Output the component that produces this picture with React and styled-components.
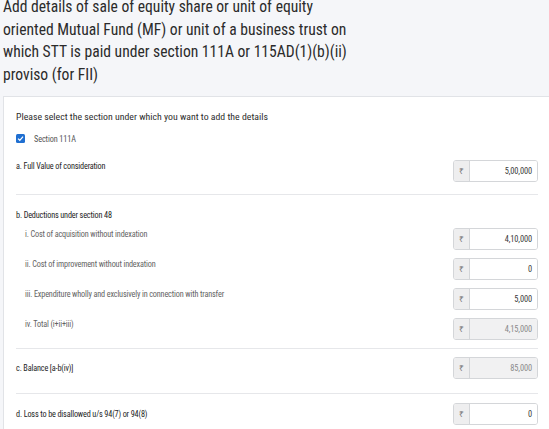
import React from 'react';
import styled, { createGlobalStyle } from 'styled-components';

const GlobalStyle = createGlobalStyle`
  html, body {
    margin: 0;
    background: #f5f6f9;
    overflow: hidden;
  }
  * {
    box-sizing: border-box;
  }
`;

const Page = styled.div`
  padding: 0 0 0 3px;
  font-family: "Roboto Condensed", Roboto, "Liberation Sans", sans-serif;
  color: #333;
`;

const Title = styled.h1`
  margin: -4px 0 0;
  width: 360px;
  font-size: 15.6px;
  font-weight: 400;
  line-height: 22.7px;
  color: #2b2b2b;
`;

const Card = styled.div`
  margin-top: 9px;
  background: #fff;
  border: 1px solid #e1e3e7;
  border-right: none;
  padding: 0 11px 0 12px;
`;

const Section = styled.div`
  padding-top: ${p => p.$top}px;
  padding-bottom: ${p => p.$bottom}px;
  border-bottom: ${p => (p.$last ? 'none' : '1px solid #e6e7ea')};
`;

const Prompt = styled.div`
  font-size: 9.8px;
  line-height: 14px;
  color: #2e2e2e;
`;

const CheckRow = styled.label`
  display: flex;
  align-items: center;
  gap: 9px;
  height: 14px;
  margin: 8px 0 14px;
  font-size: 8.2px;
  letter-spacing: -0.1px;
  color: #555;
`;

const Box = styled.span`
  width: 9px;
  height: 9px;
  border-radius: 1.5px;
  background: #1f6fd1;
  display: flex;
  align-items: center;
  justify-content: center;
`;

const Row = styled.div`
  display: flex;
  justify-content: space-between;
  align-items: ${p => (p.$center ? 'center' : 'flex-start')};
  padding-left: ${p => (p.$sub ? 9 : 0)}px;
  margin-top: ${p => p.$gap || 0}px;
`;

const Label = styled.div`
  font-size: 8.2px;
  letter-spacing: -0.15px;
  line-height: 12px;
  color: ${p => (p.$sub ? '#636363' : '#242424')};
`;

const Group = styled.div`
  display: flex;
  width: 85px;
  height: 22px;
  border: 1px solid #d4d6d9;
  border-radius: 3px;
  overflow: hidden;
`;

const Addon = styled.span`
  width: 16px;
  background: #eeeeef;
  border-right: 1px solid #d4d6d9;
  display: flex;
  align-items: center;
  justify-content: center;
  font-family: "Noto Sans", "DejaVu Sans", sans-serif;
  font-size: 8.5px;
  color: #777;
`;

const Value = styled.span`
  flex: 1;
  display: flex;
  align-items: center;
  justify-content: flex-end;
  padding-right: 5px;
  font-size: 8.4px;
  letter-spacing: -0.1px;
  background: ${p => (p.$disabled ? '#f1f1f2' : '#fff')};
  color: ${p => (p.$disabled ? '#8a8a8a' : '#3a3a3a')};
`;

function Amount({ value, disabled }) {
  return (
    <Group>
      <Addon>₹</Addon>
      <Value $disabled={disabled}>{value}</Value>
    </Group>
  );
}

const deductions = [
  { label: 'i. Cost of acquisition without indexation', value: '4,10,000' },
  { label: 'ii. Cost of improvement without indexation', value: '0' },
  { label: 'iii. Expenditure wholly and exclusively in connection with transfer', value: '5,000' },
  { label: 'iv. Total (i+ii+iii)', value: '4,15,000', disabled: true },
];

export default function App() {
  return (
    <>
      <GlobalStyle />
      <Page>
        <Title>
          Add details of sale of equity share or unit of equity oriented Mutual Fund (MF) or unit
          of a business trust on which STT is paid under section 111A or 115AD(1)(b)(ii) proviso
          (for FII)
        </Title>
        <Card>
          <Section $top={13} $bottom={12}>
            <Prompt>Please select the section under which you want to add the details</Prompt>
            <CheckRow>
              <Box>
                <svg width="7" height="7" viewBox="0 0 10 10">
                  <path d="M1.5 5.2 L4 7.6 L8.6 2.4" fill="none" stroke="#fff" strokeWidth="1.8" />
                </svg>
              </Box>
              Section 111A
            </CheckRow>
            <Row>
              <Label>a. Full Value of consideration</Label>
              <Amount value="5,00,000" />
            </Row>
          </Section>
          <Section $top={14} $bottom={8}>
            <Label>b. Deductions under section 48</Label>
            {deductions.map((d, i) => (
              <Row key={d.label} $sub $gap={i === 0 ? 7 : 8}>
                <Label $sub>{d.label}</Label>
                <Amount value={d.value} disabled={d.disabled} />
              </Row>
            ))}
          </Section>
          <Section $top={8} $bottom={14}>
            <Row $center>
              <Label>c. Balance [a-b(iv)]</Label>
              <Amount value="85,000" disabled />
            </Row>
          </Section>
          <Section $top={9} $bottom={20} $last>
            <Row $center>
              <Label>d. Loss to be disallowed u/s 94(7) or 94(8)</Label>
              <Amount value="0" />
            </Row>
          </Section>
        </Card>
      </Page>
    </>
  );
}
